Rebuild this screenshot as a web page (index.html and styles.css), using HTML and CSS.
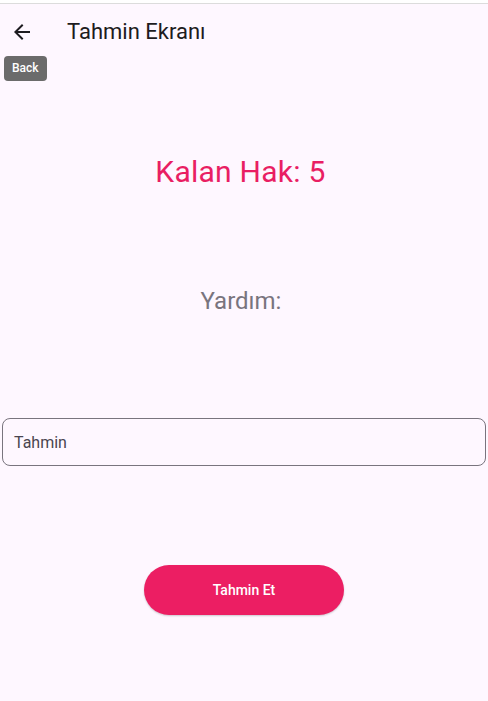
FILE: index.html
```html
<!DOCTYPE html>
<html>
<head>
<meta charset="utf-8">
<link rel="stylesheet" href="styles.css">
</head>
<body>
<div class="topstrip"></div>
<header class="appbar">
  <button class="back" aria-label="Back">
    <svg width="24" height="24" viewBox="0 0 24 24"><path d="M20 11H7.83l5.59-5.59L12 4l-8 8 8 8 1.41-1.41L7.83 13H20v-2z" fill="#1D1B20"/></svg>
  </button>
  <h1 class="title">Tahmin Ekranı</h1>
  <div class="tooltip">Back</div>
</header>
<main class="content">
  <div class="remaining">Kalan Hak: 5</div>
  <div class="hint">Yardım:</div>
  <div class="field"><span class="placeholder">Tahmin</span></div>
  <button class="submit">Tahmin Et</button>
</main>
</body>
</html>
```

FILE: styles.css
```css
html, body {
  margin: 0;
  padding: 0;
}
body {
  width: 488px;
  height: 701px;
  background: #FEF7FF;
  font-family: Roboto, "Noto Sans", sans-serif;
  overflow: hidden;
}
.topstrip {
  height: 3px;
  background: #ffffff;
  border-bottom: 1px solid #dcdcdc;
}
.appbar {
  position: relative;
  height: 56px;
  display: flex;
  align-items: center;
}
.back {
  width: 24px;
  height: 24px;
  margin-left: 10px;
  padding: 0;
  border: 0;
  background: none;
  display: flex;
}
.title {
  margin: 0 0 0 33px;
  font-size: 22px;
  font-weight: 400;
  color: #1D1B20;
  line-height: 28px;
}
.tooltip {
  position: absolute;
  left: 4px;
  top: 52px;
  height: 25px;
  padding: 0 8px;
  background: #6b6b6b;
  color: #ffffff;
  font-size: 12px;
  font-weight: 500;
  line-height: 25px;
  border-radius: 4px;
}
.content {
  display: flex;
  flex-direction: column;
  align-items: center;
}
.remaining {
  margin-top: 94px;
  padding-right: 7px;
  font-size: 30px;
  letter-spacing: 0.25px;
  line-height: 36px;
  color: #E91E63;
}
.hint {
  margin-top: 95px;
  padding-right: 6px;
  font-size: 24px;
  line-height: 32px;
  color: #79747E;
}
.field {
  box-sizing: border-box;
  align-self: stretch;
  margin: 101px 2px 0;
  height: 48px;
  border: 1px solid #79747E;
  border-radius: 8px;
  display: flex;
  align-items: center;
  padding-left: 11px;
}
.placeholder {
  font-size: 16px;
  color: #49454F;
}
.submit {
  margin-top: 99px;
  width: 200px;
  height: 50px;
  border: 0;
  border-radius: 25px;
  background: #EC1E63;
  color: #ffffff;
  font-family: Roboto, "Noto Sans", sans-serif;
  font-size: 14px;
  font-weight: 500;
  box-shadow: 0 1px 2px rgba(0,0,0,0.2);
}
```
